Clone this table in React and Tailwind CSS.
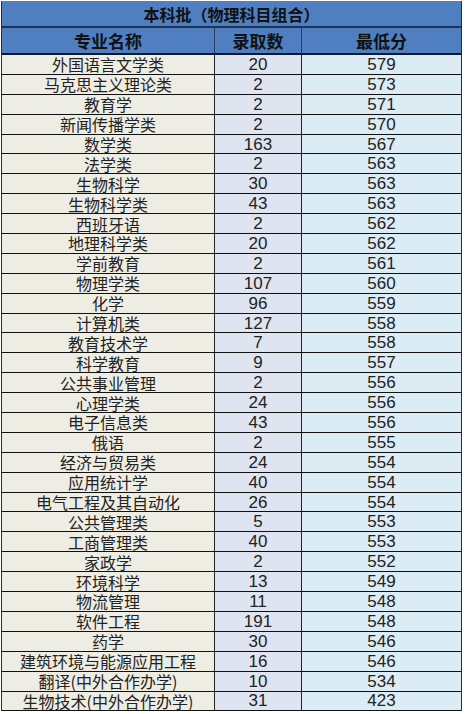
import React from "react";

const rows = [
  ["外国语言文学类", "20", "579"],
  ["马克思主义理论类", "2", "573"],
  ["教育学", "2", "571"],
  ["新闻传播学类", "2", "570"],
  ["数学类", "163", "567"],
  ["法学类", "2", "563"],
  ["生物科学", "30", "563"],
  ["生物科学类", "43", "563"],
  ["西班牙语", "2", "562"],
  ["地理科学类", "20", "562"],
  ["学前教育", "2", "561"],
  ["物理学类", "107", "560"],
  ["化学", "96", "559"],
  ["计算机类", "127", "558"],
  ["教育技术学", "7", "558"],
  ["科学教育", "9", "557"],
  ["公共事业管理", "2", "556"],
  ["心理学类", "24", "556"],
  ["电子信息类", "43", "556"],
  ["俄语", "2", "555"],
  ["经济与贸易类", "24", "554"],
  ["应用统计学", "40", "554"],
  ["电气工程及其自动化", "26", "554"],
  ["公共管理类", "5", "553"],
  ["工商管理类", "40", "553"],
  ["家政学", "2", "552"],
  ["环境科学", "13", "549"],
  ["物流管理", "11", "548"],
  ["软件工程", "191", "548"],
  ["药学", "30", "546"],
  ["建筑环境与能源应用工程", "16", "546"],
  ["翻译(中外合作办学)", "10", "534"],
  ["生物技术(中外合作办学)", "31", "423"],
];

const cjk = { fontFamily: '"Noto Sans CJK SC", "Noto Sans", sans-serif' };
const num = { fontFamily: '"Liberation Sans", Arial, sans-serif' };

export default function App() {
  return (
    <div className="w-[465px] h-[714px] bg-white overflow-hidden">
      <div className="ml-[1px] mt-[1px] w-[461px] border-l border-r border-[#2b2b2b] text-[#1a1a1a]">
        <div
          className="h-[27px] bg-[#4f7fc0] border-b-2 border-[#1c3557] flex items-center justify-center text-[16px] font-bold text-[#111] leading-none"
          style={cjk}
        >
          本科批（物理科目组合）
        </div>
        <div
          className="h-[27px] bg-[#4f7fc0] border-b-2 border-[#111827] flex text-[17px] font-bold text-[#111] leading-none"
          style={cjk}
        >
          <div className="w-[213px] flex items-center justify-center border-r border-[#2a3f60]">专业名称</div>
          <div className="w-[87px] flex items-center justify-center border-r border-[#2a3f60]">录取数</div>
          <div className="flex-1 flex items-center justify-center">最低分</div>
        </div>
        {rows.map(([name, n, s], i) => (
          <div key={i} className="h-[19.9px] flex border-b border-[#111] leading-none">
            <div
              className="w-[213px] bg-[#eeede3] flex items-center justify-center border-r border-[#222] text-[16px] text-[#222] whitespace-nowrap"
              style={cjk}
            >
              {name}
            </div>
            <div
              className="w-[87px] bg-[#dfe5f0] flex items-center justify-center border-r border-[#222] text-[17px] text-[#222]"
              style={num}
            >
              {n}
            </div>
            <div
              className="flex-1 bg-[#dcecf5] flex items-center justify-center text-[17px] text-[#222]"
              style={num}
            >
              {s}
            </div>
          </div>
        ))}
      </div>
    </div>
  );
}
